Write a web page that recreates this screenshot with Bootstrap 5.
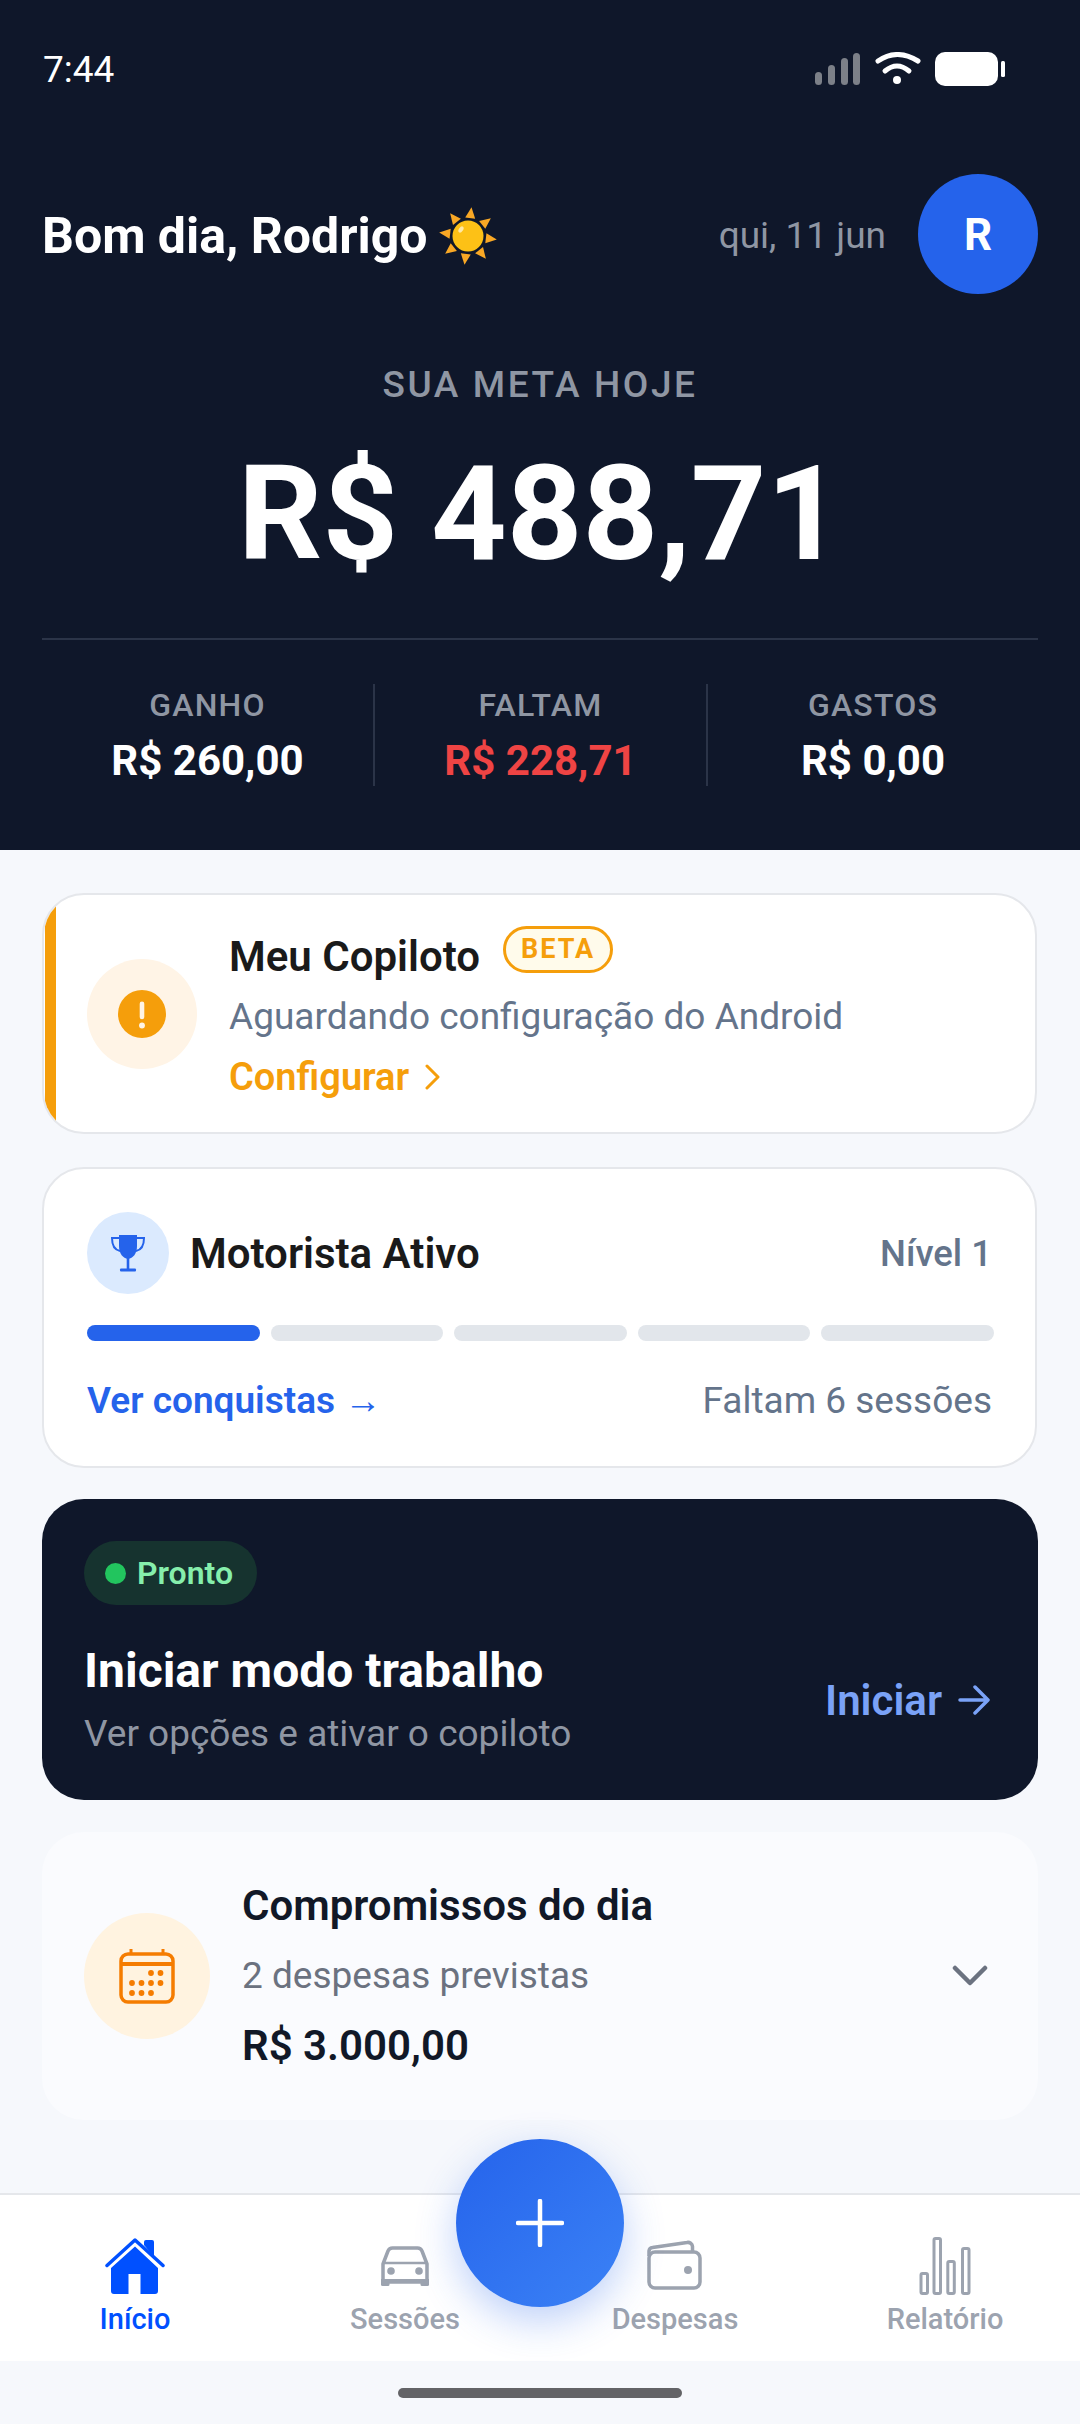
<!DOCTYPE html>
<html lang="pt-BR">
<head>
  <meta charset="UTF-8" />
  <meta name="viewport" content="width=device-width, initial-scale=1" />
  <title>Início</title>
  <link rel="stylesheet" href="https://cdn.jsdelivr.net/npm/bootstrap@5.3.0/dist/css/bootstrap.min.css" />
  <style>
    html, body { height: 2424px; overflow: hidden; }
    body { background: #f6f8fc; font-family: Roboto, "Liberation Sans", sans-serif; color: #1a1a1a; }
    .page { width: 1080px; height: 2424px; }

    /* dark header */
    .top-panel { background: #0f172a; height: 850px; padding: 0 42px; color: #fff; }
    .status-row { height: 140px; padding: 0 33px 0 1px; font-size: 37px; }
    .status-row svg { display: block; }
    .hello-row { height: 120px; margin-top: 34px; }
    .hello-text { font-size: 50px; font-weight: 700; line-height: 60px; }
    .hello-left { margin-top: 4px; }
    .hello-left svg { margin-left: 12px; }
    .today-text { font-size: 37px; color: #8f96a3; margin-top: 3px; }
    .avatar { width: 120px; height: 120px; padding-top: 2px; background: #2563eb; font-size: 44px; font-weight: 700; }
    .goal-label { margin-top: 69px; font-size: 37px; line-height: 44px; font-weight: 500; letter-spacing: 2.6px; color: #8f96a3; }
    .goal-value { margin-top: 32px; font-size: 132px; line-height: 150px; font-weight: 700; }
    .goal-rule { margin-top: 49px; height: 2px; background: #2b3448; }
    .stat-row { margin-top: 44px; height: 98px; display: grid; grid-template-columns: 331px 333px 332px; }
    .stat-cell + .stat-cell { border-left: 2px solid #2b3448; }
    .stat-label { font-size: 32px; line-height: 42px; font-weight: 500; letter-spacing: 1.2px; color: #8f96a3; }
    .stat-value { margin-top: 10px; font-size: 42px; line-height: 50px; font-weight: 700; }
    .text-danger-soft { color: #ef4444; }

    /* cards */
    .content-area { padding: 43px 42px 0; }
    .app-card { border: 2px solid #e5e7eb; border-radius: 42px; background: #fff; overflow: hidden; }
    .copilot-card { height: 241px; width: 995px; margin-bottom: 33px; }
    .copilot-bar { width: 11px; margin-left: 1px; background: #f59e0b; }
    .copilot-icon { width: 110px; height: 110px; margin: 0 32px 0 31px; background: #fff4e6; }
    .copilot-body { padding-top: 32px; }
    .card-title-text { font-size: 42px; line-height: 60px; font-weight: 600; }
    .beta-pill { margin: -1px 0 0 23px; height: 47px; padding: 0 15px; border: 3px solid #f59e0b; background: #fffbeb; color: #f59e0b; font-size: 27px; line-height: 41px; font-weight: 700; letter-spacing: 2px; }
    .copilot-sub { font-size: 37px; line-height: 59px; color: #64748b; }
    .copilot-link { font-size: 38px; line-height: 62px; font-weight: 600; color: #f59e0b; }
    .copilot-link svg { margin-left: 16px; }

    .level-card { height: 301px; width: 995px; margin-bottom: 31px; padding: 43px 41px 0 43px; }
    .level-icon { width: 82px; height: 82px; margin-right: 21px; background: #dbeafe; }
    .level-title { margin-top: 2px; }
    .level-num { font-size: 36.5px; font-weight: 500; color: #64748b; margin-right: 2px; }
    .level-track { margin-top: 31px; gap: 11px; }
    .level-seg { height: 16px; flex: 1; border-radius: 8px; background: #e2e6eb; }
    .level-seg.is-on { background: #2563eb; }
    .level-foot { margin-top: 35px; line-height: 50px; font-size: 37px; }
    .level-link { font-weight: 600; color: #2563eb; }
    .level-left { color: #64748b; margin-right: 2px; }

    .work-card { height: 301px; margin-bottom: 32px; padding: 42px 48px 0 42px; border-radius: 42px; background: #0f172a; color: #fff; }
    .ready-pill { height: 64px; width: 173px; padding-left: 21px; background: #16332f; color: #86efac; font-size: 32px; font-weight: 600; }
    .ready-dot { width: 21px; height: 21px; margin-right: 11px; background: #22c55e; }
    .work-row { margin-top: 36px; }
    .work-title { font-size: 48px; line-height: 60px; font-weight: 700; }
    .work-sub { margin-top: 8px; font-size: 37px; line-height: 50px; color: #8f96a3; }
    .work-go { font-size: 42px; font-weight: 600; color: #7aa2f7; }

    .bills-card { height: 288px; padding: 0 50px 0 42px; border-radius: 42px; background: #fafbfe; }
    .bills-icon { width: 126px; height: 126px; margin-right: 32px; background: #fff3e0; }
    .bills-title { font-size: 42px; line-height: 70px; font-weight: 600; color: #111827; }
    .bills-sub { font-size: 37px; line-height: 70px; color: #6b7280; }

    /* bottom nav */
    .bottom-nav { height: 168px; border-top: 2px solid #e5e7eb; background: #fff; }
    .nav-cell { width: 270px; padding-top: 41px; color: #9ca3af; font-size: 29px; line-height: 36px; font-weight: 500; }
    .nav-cell svg { display: block; margin-bottom: 5px; }
    .nav-cell.is-active { color: #0050ff; }
    .fab-btn { top: -56px; left: 456px; width: 168px; height: 168px; border: 0; background: linear-gradient(135deg, #2563eb, #3b82f6); box-shadow: 0 14px 40px rgba(37, 99, 235, .3); }
    .home-zone { height: 63px; padding-top: 27px; }
    .home-bar { width: 284px; height: 10px; border-radius: 5px; background: #636366; }
  </style>
</head>
<body>
  <div class="page d-flex flex-column">

    <!-- Header -->
    <header class="top-panel">
      <div class="status-row d-flex align-items-center justify-content-between">
        <span>7:44</span>
        <svg width="190" height="36" viewBox="0 0 190 36">
          <g fill="#7c8088">
            <rect x="0" y="20" width="7" height="13" rx="3.5" />
            <rect x="13" y="13" width="7" height="20" rx="3.5" />
            <rect x="26" y="6" width="7" height="27" rx="3.5" />
            <rect x="38" y="1" width="7" height="32" rx="3.5" />
          </g>
          <g fill="none" stroke="#fff" stroke-width="5" stroke-linecap="round">
            <path d="M63 9 Q82 -4 103 9" />
            <path d="M70 19 Q82 9 94 19" />
          </g>
          <circle cx="82" cy="28" r="4" fill="#fff" />
          <rect x="120" y="0" width="63" height="34" rx="10" fill="#fff" />
          <rect x="186" y="9" width="4" height="16" rx="1.5" fill="#fff" />
        </svg>
      </div>

      <div class="hello-row d-flex align-items-center justify-content-between">
        <div class="hello-left d-flex align-items-center">
          <span class="hello-text">Bom dia, Rodrigo</span>
          <svg width="58" height="60" viewBox="-29 -30 58 60">
            <g fill="#f9a825">
              <polygon points="-5,-18 5,-18 0,-29" transform="rotate(7)" />
              <polygon points="-5,-18 5,-18 0,-29" transform="rotate(52)" />
              <polygon points="-5,-18 5,-18 0,-29" transform="rotate(97)" />
              <polygon points="-5,-18 5,-18 0,-29" transform="rotate(142)" />
              <polygon points="-5,-18 5,-18 0,-29" transform="rotate(187)" />
              <polygon points="-5,-18 5,-18 0,-29" transform="rotate(232)" />
              <polygon points="-5,-18 5,-18 0,-29" transform="rotate(277)" />
              <polygon points="-5,-18 5,-18 0,-29" transform="rotate(322)" />
            </g>
            <circle r="15.5" fill="#fdc116" />
            <ellipse cx="-7" cy="-6.5" rx="2" ry="3.5" fill="#ffe9a8" transform="rotate(35 -7 -6.5)" />
          </svg>
        </div>
        <div class="d-flex align-items-center">
          <span class="today-text me-4 pe-2">qui, 11 jun</span>
          <div class="avatar rounded-circle d-flex align-items-center justify-content-center">R</div>
        </div>
      </div>

      <div class="goal-label text-center">SUA META HOJE</div>
      <div class="goal-value text-center">R$ 488,71</div>
      <div class="goal-rule"></div>

      <div class="stat-row text-center">
        <div class="stat-cell">
          <div class="stat-label">GANHO</div>
          <div class="stat-value">R$ 260,00</div>
        </div>
        <div class="stat-cell">
          <div class="stat-label">FALTAM</div>
          <div class="stat-value text-danger-soft">R$ 228,71</div>
        </div>
        <div class="stat-cell">
          <div class="stat-label">GASTOS</div>
          <div class="stat-value">R$ 0,00</div>
        </div>
      </div>
    </header>

    <main class="content-area flex-grow-1">

      <!-- Copiloto -->
      <section class="app-card copilot-card d-flex">
        <div class="copilot-bar flex-shrink-0"></div>
        <div class="copilot-icon rounded-circle d-flex align-items-center justify-content-center align-self-center flex-shrink-0">
          <svg width="48" height="48" viewBox="0 0 46 46">
            <circle cx="23" cy="23" r="23" fill="#f59e0b" />
            <rect x="20.8" y="11" width="4.4" height="17" rx="2.2" fill="#fff4e6" />
            <circle cx="23" cy="34" r="2.8" fill="#fff4e6" />
          </svg>
        </div>
        <div class="copilot-body">
          <div class="d-flex align-items-start">
            <span class="card-title-text">Meu Copiloto</span>
            <span class="beta-pill rounded-pill">BETA</span>
          </div>
          <div class="copilot-sub">Aguardando configuração do Android</div>
          <div class="copilot-link d-flex align-items-center">
            Configurar
            <svg width="16" height="26" viewBox="0 0 16 26"><path d="M2 2 L13 13 L2 24" fill="none" stroke="#f59e0b" stroke-width="3" stroke-linecap="round" stroke-linejoin="round" /></svg>
          </div>
        </div>
      </section>

      <!-- Nivel -->
      <section class="app-card level-card">
        <div class="d-flex align-items-center">
          <div class="level-icon rounded-circle d-flex align-items-center justify-content-center">
            <svg width="36" height="38" viewBox="0 0 36 38">
              <path d="M9 1 H27 V12 C27 20 23 24 18 25 C13 24 9 20 9 12 Z" fill="#2563eb" />
              <path d="M9 4 H2 C2 12 5 16 10 17 M27 4 H34 C34 12 31 16 26 17" fill="none" stroke="#2563eb" stroke-width="2" />
              <rect x="16.7" y="24" width="2.6" height="11" fill="#2563eb" />
              <rect x="10" y="34.5" width="16" height="3" rx="1" fill="#2563eb" />
            </svg>
          </div>
          <span class="card-title-text level-title">Motorista Ativo</span>
          <span class="level-num level-title ms-auto">Nível 1</span>
        </div>
        <div class="level-track d-flex">
          <div class="level-seg is-on"></div>
          <div class="level-seg"></div>
          <div class="level-seg"></div>
          <div class="level-seg"></div>
          <div class="level-seg"></div>
        </div>
        <div class="level-foot d-flex justify-content-between">
          <span class="level-link">Ver conquistas →</span>
          <span class="level-left">Faltam 6 sessões</span>
        </div>
      </section>

      <!-- Modo trabalho -->
      <section class="work-card">
        <div class="ready-pill rounded-pill d-flex align-items-center">
          <span class="ready-dot rounded-circle"></span>Pronto
        </div>
        <div class="work-row d-flex align-items-center justify-content-between">
          <div>
            <div class="work-title">Iniciar modo trabalho</div>
            <div class="work-sub">Ver opções e ativar o copiloto</div>
          </div>
          <div class="work-go d-flex align-items-center">
            Iniciar
            <svg class="ms-3" width="32" height="30" viewBox="0 0 32 30"><path d="M2 15 H29 M17 2 L30 15 L17 28" fill="none" stroke="#7aa2f7" stroke-width="3.5" stroke-linecap="round" stroke-linejoin="round" /></svg>
          </div>
        </div>
      </section>

      <!-- Compromissos -->
      <section class="bills-card d-flex align-items-center">
        <div class="bills-icon rounded-circle d-flex align-items-center justify-content-center flex-shrink-0">
          <svg width="56" height="56" viewBox="0 0 56 56">
            <g fill="none" stroke="#f57c00">
              <rect x="2" y="6" width="52" height="48" rx="7" stroke-width="3.5" />
              <path d="M2 16 H54" stroke-width="4" />
              <path d="M12 1 V6 M44 1 V6" stroke-width="3" />
            </g>
            <g fill="#f57c00">
              <circle cx="32" cy="25" r="2.9" /><circle cx="41.5" cy="25" r="2.9" />
              <circle cx="13" cy="35" r="2.9" /><circle cx="22.5" cy="35" r="2.9" /><circle cx="32" cy="35" r="2.9" /><circle cx="41.5" cy="35" r="2.9" />
              <circle cx="13" cy="45" r="2.9" /><circle cx="22.5" cy="45" r="2.9" /><circle cx="32" cy="45" r="2.9" />
            </g>
          </svg>
        </div>
        <div>
          <div class="bills-title">Compromissos do dia</div>
          <div class="bills-sub">2 despesas previstas</div>
          <div class="bills-title">R$ 3.000,00</div>
        </div>
        <svg class="ms-auto" width="36" height="22" viewBox="0 0 36 22"><path d="M3 3 L18 18 L33 3" fill="none" stroke="#6b7280" stroke-width="4.5" stroke-linecap="round" stroke-linejoin="round" /></svg>
      </section>
    </main>

    <!-- Bottom nav -->
    <nav class="bottom-nav d-flex position-relative">
      <div class="nav-cell is-active d-flex flex-column align-items-center">
        <svg width="60" height="60" viewBox="0 0 60 60">
          <path d="M30 10.5 L53 32 V55 a3 3 0 0 1 -3 3 H35.5 V38 H23.5 V58 H9 a3 3 0 0 1 -3 -3 V32 Z" fill="currentColor" />
          <path d="M2 29.5 L30 4 L58 29.5" fill="none" stroke="currentColor" stroke-width="3.5" stroke-linecap="round" stroke-linejoin="round" />
          <path d="M39 9 V6 a2 2 0 0 1 2 -2 h6 a2 2 0 0 1 2 2 V21 Z" fill="currentColor" />
        </svg>
        Início
      </div>
      <div class="nav-cell d-flex flex-column align-items-center">
        <svg width="60" height="60" viewBox="0 0 60 60">
          <path d="M8 28 L13 15 a5 5 0 0 1 4.5 -3 h25 a5 5 0 0 1 4.5 3 L52 28 V46 H8 Z" fill="none" stroke="currentColor" stroke-width="3.5" stroke-linejoin="round" />
          <path d="M8 27 H52" stroke="currentColor" stroke-width="2.5" />
          <rect x="6" y="43" width="48" height="3.5" fill="currentColor" />
          <rect x="6" y="43" width="8.5" height="7" rx="1.5" fill="currentColor" />
          <rect x="45.5" y="43" width="8.5" height="7" rx="1.5" fill="currentColor" />
          <circle cx="16" cy="35" r="3.8" fill="currentColor" />
          <circle cx="44" cy="35" r="3.8" fill="currentColor" />
        </svg>
        Sessões
      </div>
      <div class="nav-cell d-flex flex-column align-items-center">
        <svg width="60" height="60" viewBox="0 0 60 60">
          <rect x="4" y="16" width="51" height="36" rx="6" fill="none" stroke="currentColor" stroke-width="3.5" />
          <path d="M4 20 V15 a4 4 0 0 1 3.5 -3.5 L42 6.5 a4.5 4.5 0 0 1 5.5 4 V16" fill="none" stroke="currentColor" stroke-width="3.5" stroke-linejoin="round" />
          <circle cx="43" cy="34" r="4" fill="currentColor" />
        </svg>
        Despesas
      </div>
      <div class="nav-cell d-flex flex-column align-items-center">
        <svg width="60" height="60" viewBox="0 0 60 60">
          <g fill="none" stroke="currentColor" stroke-width="3">
            <rect x="6" y="37.5" width="6.5" height="20" rx="1.5" />
            <rect x="19" y="2.5" width="6.5" height="55" rx="1.5" />
            <rect x="32.8" y="25.5" width="6.5" height="32" rx="1.5" />
            <rect x="47.5" y="12.5" width="6.5" height="45" rx="1.5" />
          </g>
        </svg>
        Relatório
      </div>
      <button type="button" class="fab-btn rounded-circle position-absolute d-flex align-items-center justify-content-center" aria-label="Adicionar">
        <svg width="48" height="48" viewBox="0 0 48 48"><path d="M24 2 V46 M2 24 H46" stroke="#fff" stroke-width="4.5" stroke-linecap="round" /></svg>
      </button>
    </nav>

    <div class="home-zone d-flex justify-content-center">
      <div class="home-bar"></div>
    </div>
  </div>

  <script src="https://cdn.jsdelivr.net/npm/bootstrap@5.3.0/dist/js/bootstrap.bundle.min.js"></script>
</body>
</html>
